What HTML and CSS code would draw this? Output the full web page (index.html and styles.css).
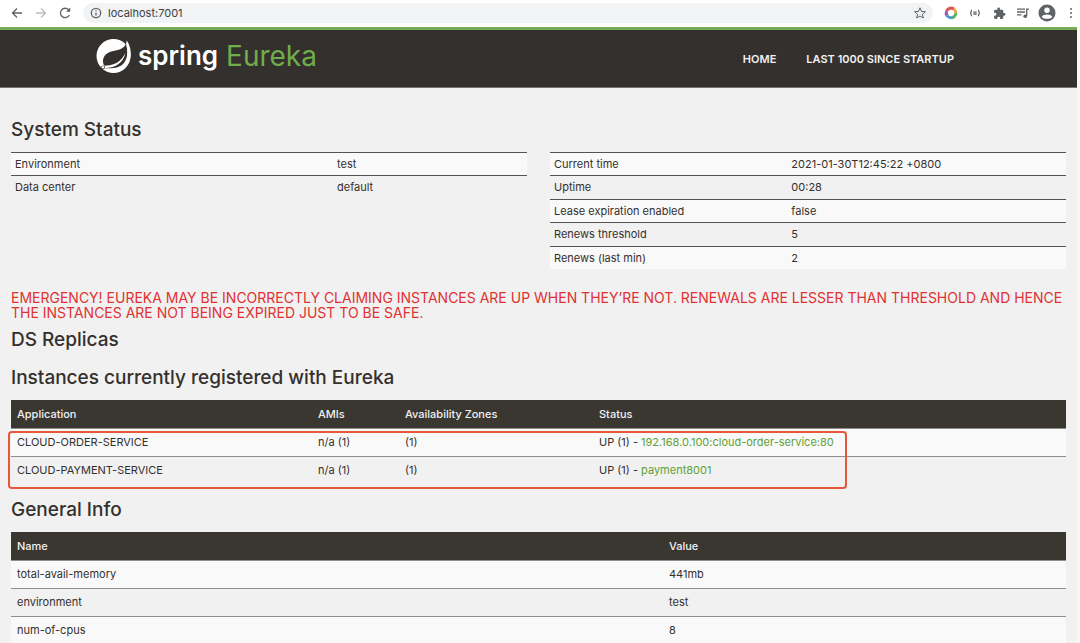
FILE: index.html
```html
<!DOCTYPE html>
<html lang="en">
<head>
<meta charset="utf-8">
<title>Eureka</title>
<meta name="viewport" content="width=device-width, initial-scale=1">
<link rel="stylesheet" href="styles.css">
</head>
<body>
<div class="toolbar">
  <div class="history">
    <button class="tool" aria-label="Back"><svg width="16" height="16" viewBox="0 0 16 16"><path d="M13 8H3.500M8 3.500 3.500 8 8 12.500" /></svg></button>
    <button class="tool faded" aria-label="Forward"><svg width="16" height="16" viewBox="0 0 16 16"><path d="M3 8h9.500M8 3.500 12.500 8 8 12.500" /></svg></button>
    <button class="tool" aria-label="Reload"><svg width="16" height="16" viewBox="0 0 16 16"><path d="M12.400 10A4.700 4.700 0 1 1 11.600 4.700L12.800 6" /><path class="solid" d="M13.200 2.600v4.200H9z" /></svg></button>
  </div>
  <div class="address">
    <svg class="info" width="12" height="12" viewBox="0 0 12 12" aria-hidden="true"><circle cx="6" cy="6" r="4.700" /><path d="M6 5.400v3M6 3.200v1.100" /></svg>
    <input class="url" type="text" value="localhost:7001" aria-label="Address">
    <button class="tool" aria-label="Bookmark"><svg width="16" height="16" viewBox="0 0 16 16"><path class="thin" d="M8 2.800 9.500 6.400l3.900.3-3 2.500.9 3.800L8 11l-3.300 2 .9-3.800-3-2.500 3.900-.3z" /></svg></button>
  </div>
  <div class="extensions">
    <button class="tool" aria-label="Color extension"><svg width="16" height="16" viewBox="0 0 16 16"><path class="ring red" d="M3.600 6A4.800 4.800 0 0 1 11 4.200" /><path class="ring orange" d="M11 4.200A4.800 4.800 0 0 1 12.800 8" /><path class="ring green" d="M12.800 8A4.800 4.800 0 0 1 8 12.800" /><path class="ring blue" d="M8 12.800A4.800 4.800 0 0 1 4 10.500" /><path class="ring purple" d="M4 10.500A4.800 4.800 0 0 1 3.600 6" /></svg></button>
    <button class="tool" aria-label="JSON viewer"><svg width="16" height="16" viewBox="0 0 16 16"><path d="M5 5.200C3.500 5.200 4.800 7.700 3.200 8c1.600.3.300 2.800 1.800 2.800M11 5.200c1.500 0 .2 2.500 1.800 2.800-1.600.3-.3 2.800-1.800 2.800M6.300 7.200h3.400M6.300 9h3.400" /></svg></button>
    <button class="tool" aria-label="Extensions"><svg width="13" height="13" viewBox="0 0 24 24"><path class="solid" d="M20.500 11H19V7a2 2 0 0 0-2-2h-4V3.500a2.500 2.500 0 0 0-5 0V5H4a2 2 0 0 0-2 2v3.800h1.500a2.700 2.700 0 0 1 0 5.400H2V20a2 2 0 0 0 2 2h3.800v-1.500a2.700 2.700 0 0 1 5.400 0V22H17a2 2 0 0 0 2-2v-4h1.500a2.500 2.500 0 0 0 0-5z" /></svg></button>
    <button class="tool" aria-label="Media"><svg width="16" height="16" viewBox="0 0 16 16"><path d="M2 4.200h8M2 7h8M2 9.800h4.500M11.700 11V4.200H14" /><circle class="solid" cx="10.200" cy="11.200" r="1.800" /></svg></button>
    <button class="tool" aria-label="Profile"><svg width="18" height="18" viewBox="0 0 18 18"><circle class="solid" cx="9" cy="9" r="8.500" /><circle class="white" cx="9" cy="6.300" r="2.700" /><path class="white" d="M3.700 12.900C4.500 11.300 7 10.600 9 10.600s4.500.7 5.300 2.300A6.500 6.500 0 0 1 9 14.800a6.500 6.500 0 0 1-5.300-1.900z" /></svg></button>
    <button class="tool" aria-label="Menu"><svg width="4" height="14" viewBox="0 0 4 14"><circle class="solid" cx="2" cy="3" r="1" /><circle class="solid" cx="2" cy="7" r="1" /><circle class="solid" cx="2" cy="11" r="1" /></svg></button>
  </div>
</div>

<div class="page">
  <header class="navbar">
    <a class="brand" href="#">
      <svg width="36" height="36" viewBox="0 0 36 36" aria-hidden="true"><circle class="disc" cx="18.500" cy="18" r="17" /><path class="shade" d="M31 5.500C29 10.500 24.500 12 18.500 13 11.500 14.200 7.800 18.500 8 23.500c.1 2.200.7 3.500 1.800 4.700L8.500 30C17 31 24.500 30 28.500 25.500 33 20.500 33 13 31 5.500z" /><path class="disc" d="M31.800 2.500C31 5 31 6 31.800 9 33.500 15 32.800 22 29 26.500L31 28.500C37.500 22 37 10 31.800 2.500z" /><path class="disc" d="M9 27.800C19 27.500 26 24 30.500 15 28.500 24.500 21 29.800 10 30z" /><circle class="shade" cx="8" cy="29.300" r="1.900" /><circle class="disc" cx="8" cy="29.300" r="1.200" /></svg>
      <span class="spring">spring</span><span class="eureka">Eureka</span>
    </a>
    <nav class="links"><a href="#">HOME</a><a href="#">LAST 1000 SINCE STARTUP</a></nav>
  </header>

  <main class="content">
    <h1>System Status</h1>
    <div class="status">
      <table class="facts">
        <colgroup><col class="wide"><col></colgroup>
        <tbody>
        <tr><td>Environment</td><td>test</td></tr>
        <tr><td>Data center</td><td>default</td></tr>
        </tbody>
      </table>
      <table class="facts">
        <colgroup><col class="medium"><col></colgroup>
        <tbody>
        <tr><td>Current time</td><td>2021-01-30T12:45:22 +0800</td></tr>
        <tr><td>Uptime</td><td>00:28</td></tr>
        <tr><td>Lease expiration enabled</td><td>false</td></tr>
        <tr><td>Renews threshold</td><td>5</td></tr>
        <tr><td>Renews (last min)</td><td>2</td></tr>
        </tbody>
      </table>
    </div>
    <p class="warning">EMERGENCY! EUREKA MAY BE INCORRECTLY CLAIMING INSTANCES ARE UP WHEN THEY’RE NOT. RENEWALS ARE LESSER THAN THRESHOLD AND HENCE THE INSTANCES ARE NOT BEING EXPIRED JUST TO BE SAFE.</p>
    <h1>DS Replicas</h1>
    <h1>Instances currently registered with Eureka</h1>
    <div class="instances">
      <table class="list">
        <colgroup><col class="app"><col class="ami"><col class="zone"><col></colgroup>
        <thead><tr><th>Application</th><th>AMIs</th><th>Availability Zones</th><th>Status</th></tr></thead>
        <tbody>
        <tr><td>CLOUD-ORDER-SERVICE</td><td>n/a (1)</td><td>(1)</td><td>UP (1) - <a href="#">192.168.0.100:cloud-order-service:80</a></td></tr>
        <tr><td>CLOUD-PAYMENT-SERVICE</td><td>n/a (1)</td><td>(1)</td><td>UP (1) - <a href="#">payment8001</a></td></tr>
        </tbody>
      </table>
      <div class="marker"></div>
    </div>
    <h1>General Info</h1>
    <table class="list">
      <colgroup><col class="name"><col></colgroup>
      <thead><tr><th>Name</th><th>Value</th></tr></thead>
      <tbody>
      <tr><td>total-avail-memory</td><td>441mb</td></tr>
      <tr><td>environment</td><td>test</td></tr>
      <tr><td>num-of-cpus</td><td>8</td></tr>
      </tbody>
    </table>
  </main>
</div>
</body>
</html>
```
FILE: styles.css
```css
* { box-sizing: border-box; }

body {
  margin: 0;
  background: #f8f8f8;
  color: #34302d;
  font: 11px/14px Inter, "Liberation Sans", sans-serif;
}

.toolbar {
  display: flex;
  align-items: center;
  gap: 10px;
  height: 27px;
  padding: 0 1px 1px 9px;
  background: #fff;
}
.history, .extensions { display: flex; align-items: center; gap: 8px; }
.tool {
  display: flex;
  align-items: center;
  justify-content: center;
  width: 16px;
  padding: 0;
  border: 0;
  background: none;
  color: #5f6368;
}
.faded { color: #babcbe; }
.tool svg, .info { flex: none; fill: none; stroke: currentColor; stroke-width: 1.3; }
.tool .solid { fill: currentColor; stroke: none; }
.tool .thin { stroke-width: 1; }
.tool .white { fill: #fff; stroke: none; }
.tool .ring { stroke-width: 3; }
.red { stroke: #e2574c; }
.orange { stroke: #f0a54a; }
.green { stroke: #58b368; }
.blue { stroke: #4a8fe0; }
.purple { stroke: #9a58b5; }
.address {
  display: flex;
  flex: 1;
  align-items: center;
  gap: 6px;
  height: 20px;
  padding: 0 5px 0 7px;
  border-radius: 10px;
  background: #f1f3f4;
  color: #5f6368;
}
.url {
  flex: 1;
  min-width: 0;
  padding: 0;
  border: 0;
  background: none;
  color: #3c4043;
  font: 11px/14px Inter, sans-serif;
}

.page {
  min-height: calc(100vh - 27px);
  margin-right: 3px;
  background: #f1f1f1;
}
.navbar {
  display: flex;
  align-items: center;
  justify-content: space-between;
  height: 61px;
  padding: 0 123px 0 95px;
  border-top: 3px solid #78ac56;
  border-bottom: 1px solid #77746f;
  background: #34302d;
}
.brand {
  display: flex;
  align-items: center;
  height: 50px;
  padding-bottom: 6px;
  font-size: 26px;
  line-height: 36px;
  text-decoration: none;
}
.disc { fill: #fff; }
.shade { fill: #34302d; }
.spring { margin: 0 8px 0 7px; color: #fff; font-weight: 600; }
.eureka { color: #70ad4b; font-size: 28px; }
.links { display: flex; gap: 30px; font-weight: 600; }
.links a { color: #f1f1f1; text-decoration: none; }

.content { padding: 29px 11px 0; }
h1 { margin: 0 0 10px; font-size: 19px; line-height: 25px; font-weight: 500; }

.status {
  display: grid;
  grid-template-columns: 1fr 1fr;
  align-items: start;
  gap: 23px;
}
table { width: 100%; border-collapse: collapse; table-layout: fixed; }
td, th { text-align: left; }
.facts td { padding: 4px; border-top: 1px solid #55524f; }
.facts tr:nth-child(even) td { padding-bottom: 5px; }
tbody tr:nth-child(odd) { background: #f9f9f9; }
.wide { width: 322px; }
.medium { width: 46%; }

.warning {
  margin: 21px 0 7px;
  color: #e03131;
  font-size: 14px;
  line-height: 15px;
}
.warning + h1 { margin-bottom: 13px; }

.instances { position: relative; margin-bottom: 13px; }
.list td, .list th { height: 28px; padding: 0 6px; }
.list th { background: #3a3731; color: #f1f1f1; font-weight: 500; }
.list td { border-top: 1px solid #908e8c; }
.list a { color: #5fa134; text-decoration: none; }
.app { width: 301px; }
.ami { width: 87px; }
.zone { width: 194px; }
.name { width: 652px; }
.marker {
  position: absolute;
  top: 31px;
  right: 219px;
  bottom: -5px;
  left: -3px;
  border: 2px solid #e8573a;
  border-radius: 4px;
  pointer-events: none;
}
```
